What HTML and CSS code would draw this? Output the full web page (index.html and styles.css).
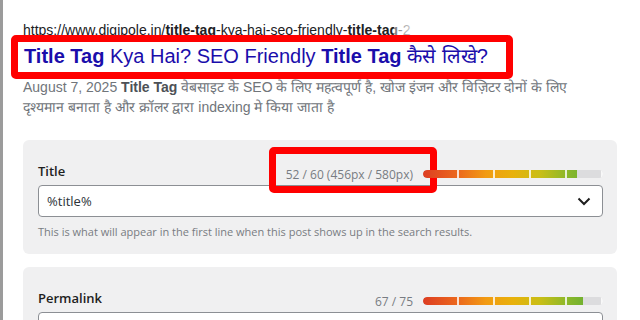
FILE: index.html
```html
<!DOCTYPE html>
<html lang="en">
<head>
    <meta charset="UTF-8">
    <meta name="viewport" content="width=device-width, initial-scale=1.0">
    <title>Title Tag Preview</title>
    <link rel="stylesheet" href="styles.css">
</head>
<body>

    <div class="page">
        <div class="side-strip"></div>

        <main class="main">
            <div class="serp">
                <div class="serp-url">https://www.digipole.in/<b>title-tag</b>-kya-hai-seo-friendly-<b>title-tag</b>-2<span class="url-fade"></span></div>
                <div class="serp-title marked">
                    <b>Title Tag</b> Kya Hai? SEO Friendly <b>Title Tag</b> कैसे लिखे?
                </div>
                <p class="serp-desc">
                    August 7, 2025 <b>Title Tag</b> वेबसाइट के SEO के लिए महत्वपूर्ण है, खोज इंजन और विज़िटर दोनों के लिए<br>
                    दृश्यमान बनाता है और क्रॉलर द्वारा indexing मे किया जाता है
                </p>
            </div>

            <div class="field-card">
                <div class="field-head">
                    <label class="field-label" for="titleInput">Title</label>
                    <span class="counter marked">52 / 60 (456px / 580px)</span>
                    <div class="meter"><div class="meter-fill" style="width: 85.6%"></div></div>
                </div>
                <div class="select-box" id="titleInput">
                    <span>%title%</span>
                    <svg class="chevron" width="14" height="9" viewBox="0 0 14 9">
                        <path d="M1.5 1.5 L7 7 L12.5 1.5" fill="none" stroke="#1e1e1e" stroke-width="2"/>
                    </svg>
                </div>
                <p class="field-help">This is what will appear in the first line when this post shows up in the search results.</p>
            </div>

            <div class="field-card">
                <div class="field-head">
                    <label class="field-label" for="permalinkInput">Permalink</label>
                    <span class="counter">67 / 75</span>
                    <div class="meter"><div class="meter-fill" style="width: 88.9%"></div></div>
                </div>
                <div class="select-box" id="permalinkInput"></div>
            </div>
        </main>
    </div>

</body>
</html>
```

FILE: styles.css
```css
body {
    margin: 0;
    background-color: #fff;
    font-family: Arial, "Liberation Sans", sans-serif;
    overflow: hidden;
}

.page {
    display: flex;
    height: 320px;
}

.side-strip {
    width: 3px;
    background-color: #9b9b9b;
    flex-shrink: 0;
}

.main {
    flex: 1;
    padding: 21px 23px 0 20px;
}

/* search result preview */
.serp-url {
    position: relative;
    display: inline-block;
    font-size: 14px;
    line-height: 18px;
    color: #202124;
}

.url-fade {
    position: absolute;
    top: -6px;
    right: -30px;
    width: 46px;
    height: 26px;
    background: linear-gradient(to right, rgba(255, 255, 255, 0.4), #fff 60%);
}

.serp-title {
    position: relative;
    margin-top: 4px;
    font-size: 20px;
    line-height: 26px;
    color: #1a0dab;
    padding-left: 1px;
}

.serp-title b {
    font-weight: bold;
}

.marked::after {
    content: "";
    position: absolute;
    border: 7px solid #ff0000;
    border-radius: 5px;
}

.serp-title.marked::after {
    left: -12px;
    right: 104px;
    top: -8px;
    bottom: -10px;
}

.serp-desc {
    margin: 8px 0 0 0;
    font-size: 14px;
    line-height: 20px;
    color: #70757a;
}

.serp-desc b {
    color: #4d5156;
}

/* settings cards */
.field-card {
    background-color: #f0f0f1;
    border-radius: 6px;
    padding: 20px 14px 14px 15px;
    margin-top: 23px;
    font-family: "Open Sans", sans-serif;
}

.field-card + .field-card {
    margin-top: 13px;
}

.field-head {
    display: flex;
    align-items: center;
    height: 24px;
    margin-bottom: 1px;
}

.field-label {
    flex: 1;
    font-size: 13px;
    font-weight: 600;
    color: #1e1e1e;
    margin-top: -3px;
}

.counter {
    position: relative;
    font-size: 12px;
    color: #787c82;
    margin-right: 10px;
    margin-top: 5px;
}

.counter.marked::after {
    left: -17px;
    right: -24px;
    top: -19px;
    bottom: -10px;
}

.meter {
    width: 180px;
    height: 8px;
    background-color: #dcdcde;
    border-radius: 4px;
    overflow: hidden;
    position: relative;
    margin-top: 3px;
}

.meter-fill {
    height: 100%;
    background: linear-gradient(to right, #dd3d22 0, #ec6a1d 20%, #f29b13 35%, #e8b10b 50%, #c9be16 65%, #8cb82a 80%, #54a937 100%);
    background-size: 180px 8px;
    border-radius: 4px 0 0 4px;
}

.meter::after {
    content: "";
    position: absolute;
    inset: 0;
    background: repeating-linear-gradient(to right, transparent 0, transparent 34px, #fff 34px, #fff 36px);
    opacity: 0.8;
}

.select-box {
    display: flex;
    align-items: center;
    justify-content: space-between;
    height: 30px;
    background-color: #fff;
    border: 1px solid #8c8f94;
    border-radius: 4px;
    padding: 0 11px 0 8px;
    font-size: 13px;
    color: #2c3338;
}

.chevron {
    display: block;
}

.field-help {
    margin: 7px 0 0 0;
    font-size: 11px;
    line-height: 16px;
    color: #787c82;
}
```
